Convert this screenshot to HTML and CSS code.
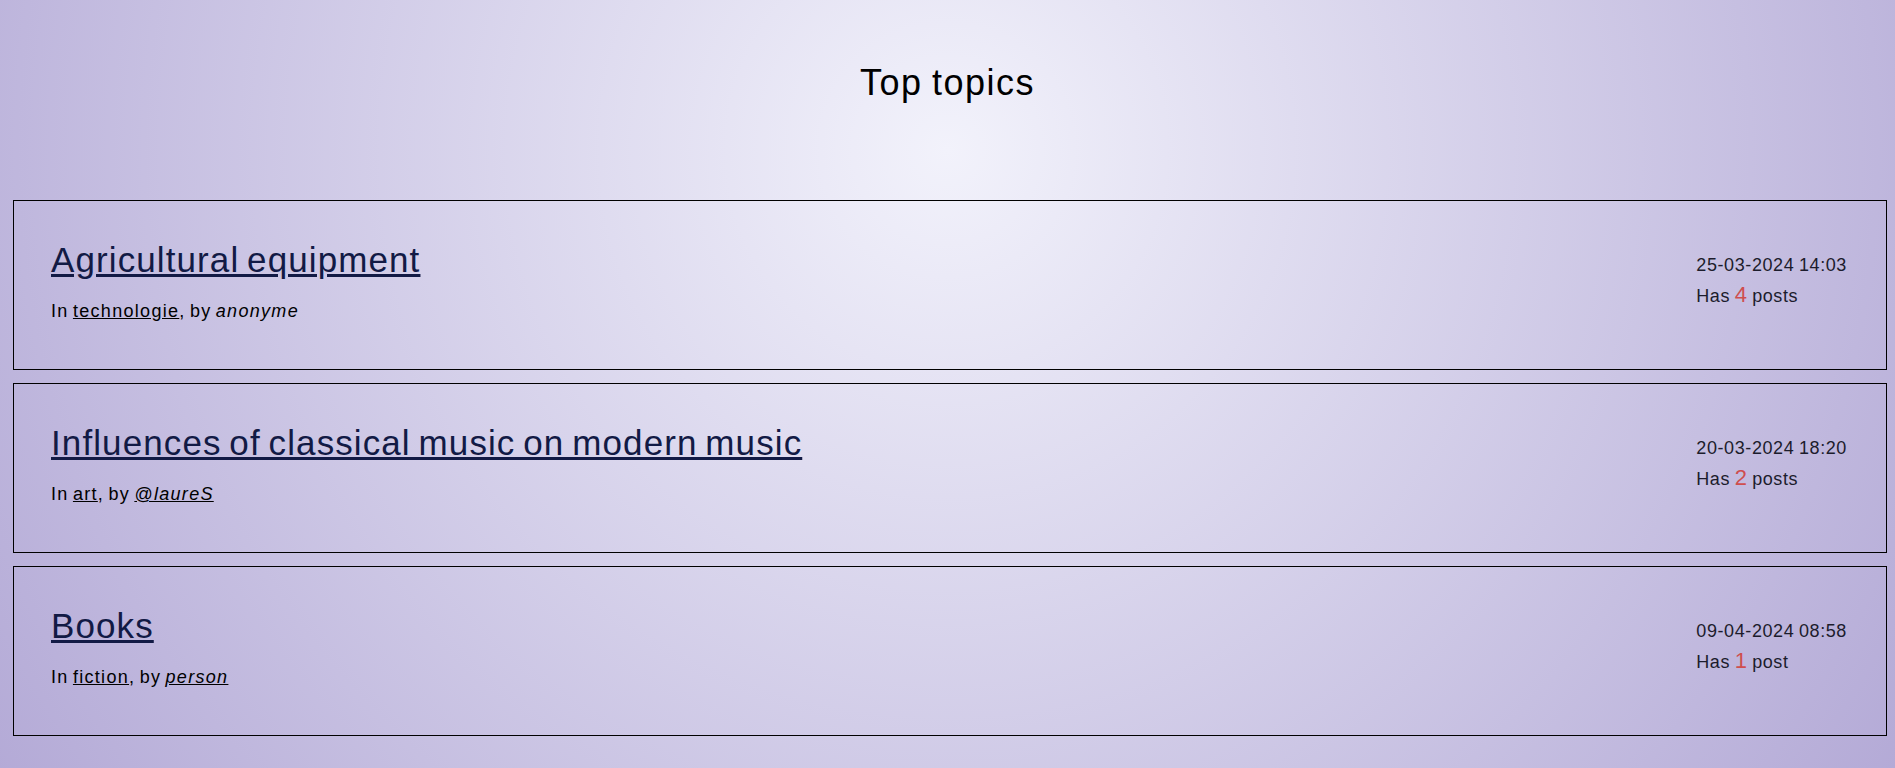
FILE: index.html
```html
<!DOCTYPE html>
<html lang="en">
<head>
<meta charset="utf-8">
<title>Top topics</title>
<link rel="stylesheet" href="styles.css">
</head>
<body>
  <h1 class="page-title">Top topics</h1>
  <main class="topics">
    <article class="topic">
      <div class="topic-main">
        <h2 class="topic-title"><a href="#">Agricultural equipment</a></h2>
        <p class="topic-meta">In <a href="#">technologie</a>, by <em>anonyme</em></p>
      </div>
      <div class="topic-side">
        <div class="topic-date">25-03-2024 14:03</div>
        <div class="topic-count">Has <span class="count">4</span> posts</div>
      </div>
    </article>
    <article class="topic">
      <div class="topic-main">
        <h2 class="topic-title"><a href="#">Influences of classical music on modern music</a></h2>
        <p class="topic-meta">In <a href="#">art</a>, by <a href="#"><em>@laureS</em></a></p>
      </div>
      <div class="topic-side">
        <div class="topic-date">20-03-2024 18:20</div>
        <div class="topic-count">Has <span class="count">2</span> posts</div>
      </div>
    </article>
    <article class="topic">
      <div class="topic-main">
        <h2 class="topic-title"><a href="#">Books</a></h2>
        <p class="topic-meta">In <a href="#">fiction</a>, by <a href="#"><em>person</em></a></p>
      </div>
      <div class="topic-side">
        <div class="topic-date">09-04-2024 08:58</div>
        <div class="topic-count">Has <span class="count">1</span> post</div>
      </div>
    </article>
  </main>
</body>
</html>
```
FILE: styles.css
```css
html {
  min-height: 100%;
  background: radial-gradient(circle 1150px at 947px 150px, #f2f2fb 0%, #b3a9d6 100%);
}

body {
  margin: 8px;
  font-family: "Liberation Sans", Arial, sans-serif;
  color: #000;
}

.page-title {
  margin: 54px 0 97px;
  font-size: 36px;
  font-weight: normal;
  letter-spacing: 1.5px;
  word-spacing: -2px;
  text-align: center;
  line-height: 41px;
}

.topics {
  display: flex;
  flex-direction: column;
  gap: 13px;
  margin-left: 5px;
}

.topic {
  display: flex;
  justify-content: space-between;
  align-items: center;
  border: 1px solid #000;
  padding: 39px 39px 47px 37px;
}

.topic-title {
  margin: 0 0 20px;
  font-size: 35px;
  line-height: 40px;
  font-weight: normal;
  letter-spacing: 1.1px;
  word-spacing: -3px;
}

.topic-title a {
  color: #121a45;
}

.topic-meta {
  margin: 0;
  font-size: 18px;
  line-height: 22px;
  letter-spacing: 1.3px;
  word-spacing: -2px;
}

.topic-meta a {
  color: #000;
}

.topic-side {
  font-size: 18px;
  line-height: 29px;
  color: #1c1c2c;
  letter-spacing: 0.6px;
  word-spacing: -1px;
}

.count {
  font-size: 22px;
  color: #cf4e4e;
}
```
